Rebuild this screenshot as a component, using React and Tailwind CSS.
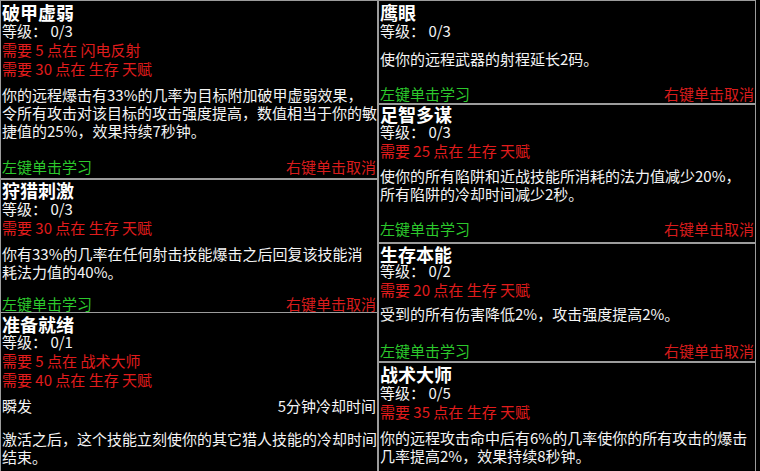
import React from 'react';

// one talent tooltip; spacing props are full class strings so tailwind picks them up
function Tip({ box, pt, titleLh, title, level, reqs = [], gapA, cast, gapC, lines, gapB, footer = true }) {
  return (
    <div className={`${box} shrink-0 overflow-hidden border border-[#9c9c9c] bg-black px-px`}>
      <div className={pt} />
      <div className={`${titleLh} whitespace-nowrap text-[18px] font-bold text-white`}>{title}</div>
      <div className="whitespace-pre text-[15px] leading-[18px] text-[#f4f4f4]">等级： {level}</div>
      {reqs.map((r) => (
        <div key={r} className="whitespace-pre text-[15px] leading-[19px] text-[#e01c1c]">
          {r}
        </div>
      ))}
      <div className={gapA} />
      {cast && (
        <>
          <div className="flex justify-between text-[15px] leading-[18px] text-[#f4f4f4]">
            <span>{cast[0]}</span>
            <span>{cast[1]}</span>
          </div>
          <div className={gapC} />
        </>
      )}
      {lines.map((l) => (
        <div key={l} className="whitespace-nowrap text-[15px] leading-[18px] text-[#f4f4f4]">
          {l}
        </div>
      ))}
      <div className={gapB} />
      {footer && (
        <div className="flex justify-between whitespace-nowrap text-[15px] leading-[18px]">
          <span className="text-[#2cc82c]">左键单击学习</span>
          <span className="text-[#d81c1c]">右键单击取消</span>
        </div>
      )}
    </div>
  );
}

export default function App() {
  return (
    <div className="flex h-[471px] w-[760px] overflow-hidden bg-black font-['Noto_Sans_CJK_SC','Liberation_Sans',sans-serif]">
      <div className="flex w-[378px] shrink-0 flex-col">
        <Tip
          box="h-[179px]"
          pt="h-px"
          titleLh="leading-[20px]"
          title="破甲虚弱"
          level="0/3"
          reqs={['需要 5 点在 闪电反射', '需要 30 点在 生存 天赋']}
          gapA="h-[8px]"
          lines={[
            '你的远程爆击有33%的几率为目标附加破甲虚弱效果，',
            '令所有攻击对该目标的攻击强度提高，数值相当于你的敏',
            '捷值的25%，效果持续7秒钟。',
          ]}
          gapB="h-[18px]"
        />
        <Tip
          box="h-[133px] border-b-0"
          pt="h-0"
          titleLh="leading-[20px]"
          title="狩猎刺激"
          level="0/3"
          reqs={['需要 30 点在 生存 天赋']}
          gapA="h-[8px]"
          lines={['你有33%的几率在任何射击技能爆击之后回复该技能消', '耗法力值的40%。']}
          gapB="h-[14px]"
        />
        <Tip
          box="h-[159px] border-b-0"
          pt="h-[2px]"
          titleLh="leading-[18px]"
          title="准备就绪"
          level="0/1"
          reqs={['需要 5 点在 战术大师', '需要 40 点在 生存 天赋']}
          gapA="h-[8px]"
          cast={['瞬发', '5分钟冷却时间']}
          gapC="h-[15px]"
          lines={['激活之后，这个技能立刻使你的其它猎人技能的冷却时间', '结束。']}
          gapB="h-0"
          footer={false}
        />
      </div>
      <div className="flex w-[378px] shrink-0 flex-col">
        <Tip
          box="h-[104px]"
          pt="h-px"
          titleLh="leading-[20px]"
          title="鹰眼"
          level="0/3"
          gapA="h-[10px]"
          lines={['使你的远程武器的射程延长2码。']}
          gapB="h-[17px]"
        />
        <Tip
          box="h-[139px]"
          pt="h-0"
          titleLh="leading-[18px]"
          title="足智多谋"
          level="0/3"
          reqs={['需要 25 点在 生存 天赋']}
          gapA="h-[7px]"
          lines={['使你的所有陷阱和近战技能所消耗的法力值减少20%，', '所有陷阱的冷却时间减少2秒。']}
          gapB="h-[17px]"
        />
        <Tip
          box="h-[119px]"
          pt="h-[2px]"
          titleLh="leading-[16px]"
          title="生存本能"
          level="0/2"
          reqs={['需要 20 点在 生存 天赋']}
          gapA="h-[6px]"
          lines={['受到的所有伤害降低2%，攻击强度提高2%。']}
          gapB="h-[19px]"
        />
        <Tip
          box="h-[109px] border-b-0"
          pt="h-px"
          titleLh="leading-[20px]"
          title="战术大师"
          level="0/5"
          reqs={['需要 35 点在 生存 天赋']}
          gapA="h-[8px]"
          lines={['你的远程攻击命中后有6%的几率使你的所有攻击的爆击', '几率提高2%，效果持续8秒钟。']}
          gapB="h-0"
          footer={false}
        />
      </div>
    </div>
  );
}
